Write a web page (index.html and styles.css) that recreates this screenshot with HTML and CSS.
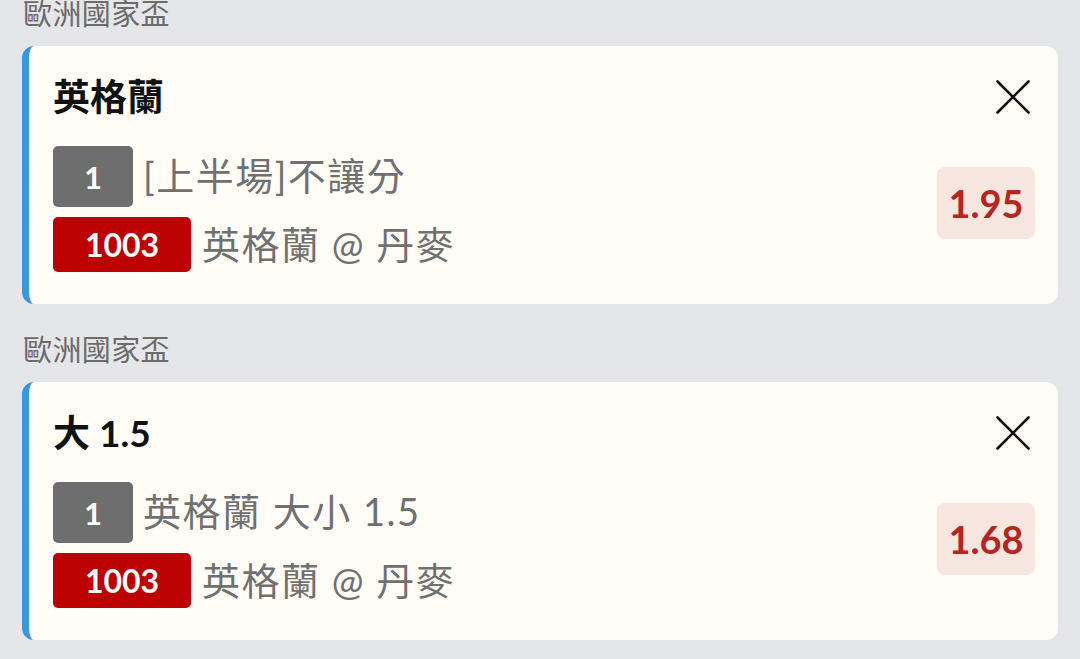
FILE: index.html
```html
<!DOCTYPE html>
<html lang="zh-Hant">
<head>
<meta charset="utf-8">
<link rel="stylesheet" href="styles.css">
</head>
<body>
<div class="list">
  <section class="group">
    <div class="league">歐洲國家盃</div>
    <div class="card">
      <div class="card-head">
        <div class="title">英格蘭</div>
        <button class="close" aria-label="close">
          <svg width="34" height="34" viewBox="0 0 34 34"><path d="M1.5 1.5 L32.5 32.5 M32.5 1.5 L1.5 32.5" stroke="#111" stroke-width="2.6" stroke-linecap="round" fill="none"/></svg>
        </button>
      </div>
      <div class="card-body">
        <div class="lines">
          <div class="line"><span class="badge grey">1</span><span class="desc">[上半場]不讓分</span></div>
          <div class="line"><span class="badge red">1003</span><span class="desc">英格蘭 @ 丹麥</span></div>
        </div>
        <div class="odds">1.95</div>
      </div>
    </div>
  </section>
  <section class="group">
    <div class="league">歐洲國家盃</div>
    <div class="card">
      <div class="card-head">
        <div class="title">大 1.5</div>
        <button class="close" aria-label="close">
          <svg width="34" height="34" viewBox="0 0 34 34"><path d="M1.5 1.5 L32.5 32.5 M32.5 1.5 L1.5 32.5" stroke="#111" stroke-width="2.6" stroke-linecap="round" fill="none"/></svg>
        </button>
      </div>
      <div class="card-body">
        <div class="lines">
          <div class="line"><span class="badge grey">1</span><span class="desc">英格蘭 大小 1.5</span></div>
          <div class="line"><span class="badge red">1003</span><span class="desc">英格蘭 @ 丹麥</span></div>
        </div>
        <div class="odds">1.68</div>
      </div>
    </div>
  </section>
</div>
</body>
</html>
```
FILE: styles.css
```css
* { box-sizing: border-box; }
html, body {
  margin: 0;
  padding: 0;
  background: #e5e6e9;
  font-family: "Lato", "Noto Sans CJK TC", sans-serif;
  overflow: hidden;
}
.list {
  display: flex;
  flex-direction: column;
  padding: 0 22px 0 22px;
  margin-top: -2px;
}
.group {
  display: flex;
  flex-direction: column;
}
.group + .group { margin-top: 30px; }
.league {
  font-size: 29px;
  line-height: 32px;
  height: 32px;
  color: #6b6b6b;
  padding-left: 1px;
  letter-spacing: 0.4px;
  margin-bottom: 16px;
  white-space: nowrap;
}
.card {
  background: #fffdf5;
  border-left: 7px solid #3a97db;
  border-radius: 12px;
  height: 258px;
  padding: 29px 23px 0 24px;
  display: flex;
  flex-direction: column;
}
.card-head {
  display: flex;
  align-items: center;
  justify-content: space-between;
  height: 44px;
}
.title {
  font-size: 37px;
  font-weight: 700;
  color: #111;
  line-height: 44px;
}
.close {
  background: none;
  border: 0;
  padding: 0;
  margin-right: 5px;
  width: 34px;
  height: 34px;
  display: flex;
}
.card-body {
  display: flex;
  align-items: center;
  justify-content: space-between;
  margin-top: 27px;
}
.lines {
  display: flex;
  flex-direction: column;
  gap: 10px;
}
.line {
  display: flex;
  align-items: center;
}
.badge {
  display: flex;
  align-items: center;
  justify-content: center;
  color: #fff;
  border-radius: 5px;
  font-weight: 700;
}
.badge.grey {
  width: 80px;
  height: 61px;
  background: #6e6e6e;
  font-size: 31px;
}
.badge.red {
  width: 138px;
  height: 55px;
  background: #bb0102;
  font-size: 32px;
}
.desc {
  margin-left: 10px;
  font-size: 38px;
  font-weight: 400;
  letter-spacing: 1.5px;
  color: #707070;
  line-height: 44px;
  white-space: nowrap;
  position: relative;
  top: -2px;
}
.line + .line .desc { margin-left: 11px; top: -1px; }
.odds {
  width: 98px;
  height: 72px;
  background: #f7e5df;
  border-radius: 8px;
  color: #b4261f;
  font-size: 38px;
  font-weight: 700;
  display: flex;
  align-items: center;
  justify-content: center;
  margin-bottom: 12px;
}
```
